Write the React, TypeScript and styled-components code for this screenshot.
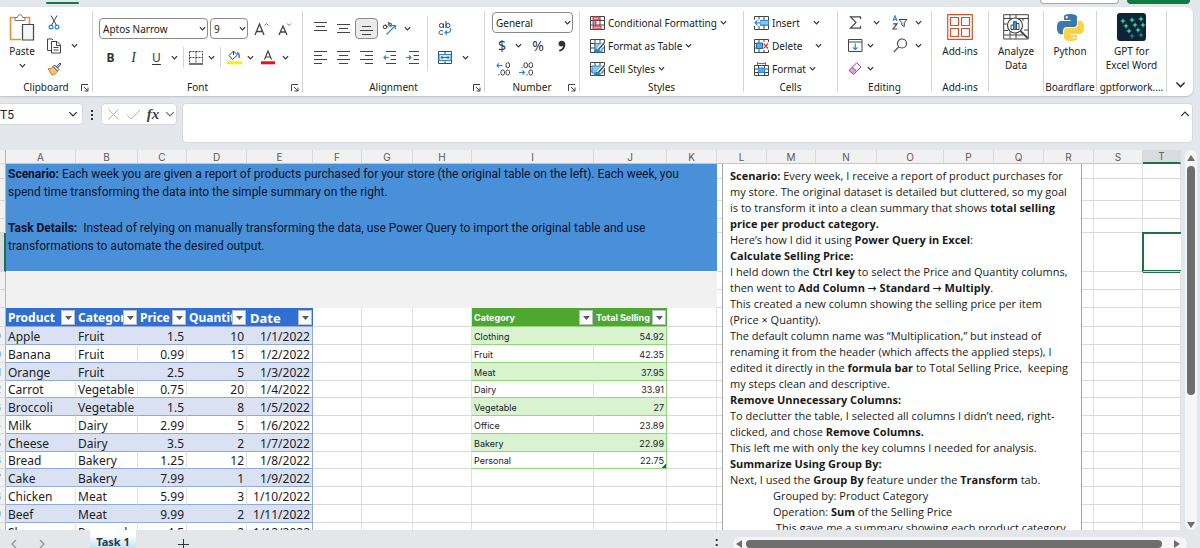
import React from "react";
import styled, { createGlobalStyle, css } from "styled-components";

const uiFont = `"Noto Sans", "Open Sans", sans-serif`;
const ink = "#333";
const blue = "#2b88d8";

const GlobalStyle = createGlobalStyle`
  * { box-sizing: border-box; }
  body { margin: 0; background: #e3e6eb; font-family: ${uiFont}; font-size: 10px; color: #222; overflow: hidden; }
  button, input, select { font: inherit; color: inherit; margin: 0; }
  button { background: none; border: 0; padding: 0; }
  svg { display: block; flex: none; }
`;

/* ---------- frame ---------- */
const Window = styled.div`
  display: flex;
  flex-direction: column;
  height: 100vh;
`;
const TabStrip = styled.header`
  flex: none;
  display: flex;
  align-items: flex-start;
  height: 7px;
  padding: 0 10px 0 46px;
  overflow: hidden;
`;
const ActiveTabMark = styled.span`
  width: 33px;
  height: 2px;
  margin: 2px auto 0 0;
  border-radius: 1px;
  background: #107c41;
`;
const TopButton = styled.button<{ $primary?: boolean }>`
  height: 4px;
  width: ${(p) => (p.$primary ? 63 : 79)}px;
  margin-left: 8px;
  border-radius: 0 0 4px 4px;
  background: ${(p) => (p.$primary ? "#107c41" : "#fff")};
  border: 1px solid ${(p) => (p.$primary ? "#107c41" : "#a8a8a8")};
  border-top: 0;
`;

/* ---------- ribbon ---------- */
const Ribbon = styled.nav`
  flex: none;
  display: flex;
  height: 89px;
  margin-right: 7px;
  padding-top: 4px;
  background: #fff;
  border-radius: 0 7px 7px 0;
  box-shadow: 0 1px 2px rgba(0, 0, 0, 0.18);
`;
const GroupBox = styled.section<{ $w: number }>`
  position: relative;
  flex: none;
  display: flex;
  flex-direction: column;
  width: ${(p) => p.$w}px;
  height: 81px;
  border-right: 1px solid #d4d4d4;
`;
const GroupBody = styled.div<{ $pad?: number }>`
  display: flex;
  height: 71px;
  padding-left: ${(p) => p.$pad ?? 0}px;
`;
const GroupLabel = styled.div`
  line-height: 10px;
  text-align: center;
  white-space: nowrap;
`;
const Launcher = styled.button`
  position: absolute;
  right: 3px;
  bottom: 0;
`;
const Stack = styled.div<{ $top?: number }>`
  display: flex;
  flex-direction: column;
  padding-top: ${(p) => p.$top ?? 0}px;
`;
const Row = styled.div<{ $h?: number }>`
  display: flex;
  align-items: center;
  height: ${(p) => p.$h ?? 23}px;
`;
const Spacer = styled.span<{ $w: number }>`
  flex: none;
  width: ${(p) => p.$w}px;
`;
const IconButton = styled.button<{ $w?: number; $boxed?: boolean }>`
  display: flex;
  flex: none;
  align-items: center;
  justify-content: center;
  width: ${(p) => p.$w ?? 23}px;
  height: 21px;
  color: ${ink};
  ${(p) =>
    p.$boxed &&
    css`
      background: #ebebeb;
      border: 1px solid #8a8a8a;
      border-radius: 4px;
    `}
`;
const Glyph = styled.span<{ $size?: number; $style?: "bold" | "italic" | "underline" }>`
  font-size: ${(p) => p.$size ?? 12}px;
  line-height: 16px;
  ${(p) => p.$style === "bold" && "font-weight: 700;"}
  ${(p) => p.$style === "italic" && `font-style: italic; font-family: "Liberation Serif", serif;`}
  ${(p) => p.$style === "underline" && "text-decoration: underline; text-underline-offset: 2px;"}
`;
const Separator = styled.span<{ $h?: number }>`
  width: 1px;
  height: ${(p) => p.$h ?? 21}px;
  margin: 0 3px;
  background: #d4d4d4;
`;
const TextButton = styled.button<{ $gap?: number }>`
  display: flex;
  align-items: center;
  height: 23px;
  gap: 3px;
  white-space: nowrap;
  & > svg:last-child {
    margin-left: ${(p) => p.$gap ?? 0}px;
  }
`;
const TallButton = styled.button<{ $w?: number }>`
  display: flex;
  flex-direction: column;
  align-items: center;
  width: ${(p) => (p.$w ? `${p.$w}px` : "100%")};
  padding-top: 2px;
  line-height: 14px;
`;
const TallIcon = styled.span`
  display: flex;
  align-items: center;
  height: 28px;
  margin-bottom: 3px;
`;
const TallDrop = styled.span`
  margin-top: 4px;
`;
const SelectFrame = styled.label<{ $w: number }>`
  position: relative;
  width: ${(p) => p.$w}px;
  height: 21px;
  margin-right: 2px;
  & > svg {
    position: absolute;
    right: 2px;
    top: 7px;
    pointer-events: none;
  }
`;
const Select = styled.select`
  appearance: none;
  width: 100%;
  height: 100%;
  padding: 0 0 0 3px;
  border: 1px solid #8a8a8a;
  border-radius: 4px;
  background: #fff;
`;
const RibbonEnd = styled.div`
  flex: 1;
  display: flex;
  align-items: flex-end;
  justify-content: center;
  padding-bottom: 6px;
`;

/* ---------- formula bar ---------- */
const FormulaRow = styled.div`
  flex: none;
  display: flex;
  align-items: flex-start;
  padding: 7px 7px 7px 0;
`;
const NameFrame = styled.div`
  display: flex;
  align-items: center;
  width: 83px;
  height: 22px;
  padding-right: 4px;
  background: #fff;
  border: 1px solid #d6d8dc;
  border-left: 0;
  border-radius: 0 4px 4px 0;
`;
const NameInput = styled.input`
  flex: 1;
  min-width: 0;
  border: 0;
  padding: 1px 0 0;
  background: none;
  font-family: Roboto, sans-serif;
  font-size: 12px;
`;
const Dots = styled.span`
  display: flex;
  justify-content: center;
  width: 18px;
  padding-top: 7px;
`;
const FxFrame = styled.div`
  display: flex;
  align-items: center;
  justify-content: space-between;
  width: 76px;
  height: 22px;
  margin-right: 5px;
  padding: 0 1px 0 5px;
  background: #fff;
  border: 1px solid #d6d8dc;
  border-radius: 4px;
`;
const FxGlyph = styled.span`
  font: italic 700 15px / 20px "Liberation Serif", serif;
  color: #444;
`;
const FormulaFrame = styled.div`
  flex: 1;
  display: flex;
  align-items: flex-start;
  height: 40px;
  padding: 5px 2px 0 6px;
  background: #fff;
  border: 1px solid #d6d8dc;
  border-radius: 4px;
`;
const FormulaInput = styled.input`
  flex: 1;
  border: 0;
  background: none;
`;

/* ---------- sheet ---------- */
const SheetArea = styled.main`
  flex: 1;
  min-height: 0;
  display: flex;
`;
const SheetView = styled.div`
  position: relative;
  flex: 1;
  min-width: 0;
  overflow: hidden;
  background: #fff;
`;
const SheetTable = styled.table`
  width: 100%;
  table-layout: fixed;
  border-collapse: separate;
  border-spacing: 0;
`;
const Tr = styled.tr<{ $h: number }>`
  height: ${(p) => p.$h}px;
`;
const ColHead = styled.th<{ $active?: boolean }>`
  height: 14px;
  padding: 0;
  font: 400 10px / 12px Inter, sans-serif;
  color: #5a5a5a;
  background: ${(p) => (p.$active ? "#d9dbde" : "#f1f1f1")};
  border-right: 1px solid #d9d9d9;
  border-bottom: ${(p) => (p.$active ? "2px solid #1e7145" : "1px solid #c4c4c4")};
`;
const RowHead = styled.th<{ $active?: boolean }>`
  padding: 0;
  background: ${(p) => (p.$active ? "#d9dbde" : "#f1f1f1")};
  border-right: ${(p) => (p.$active ? "2px solid #1e7145" : "1px solid #b5b5b5")};
  border-bottom: 1px solid #d9d9d9;
  overflow: hidden;
`;
const RowNumber = styled.div`
  display: flex;
  justify-content: flex-end;
  padding-right: 4px;
  font: 400 10px / 12px Inter, sans-serif;
  color: #5a6b80;
`;
const Cell = styled.td<{ $active?: boolean }>`
  padding: 0;
  border-right: 1px solid #e0e0e0;
  border-bottom: 1px solid #d9d9d9;
  ${(p) =>
    p.$active &&
    css`
      border-right: 0;
      box-shadow: 0 0 0 1px #1e7145, inset 1px 1px #1e7145, inset 0 -1px #1e7145;
    `}
`;
const Brief = styled.td`
  padding: 1px 2px 0;
  vertical-align: top;
  background: #4a90d9;
  border-bottom: 1px solid #fff;
  font: 400 12px / 18px Roboto, sans-serif;
  color: #08142c;
`;
const BriefLine = styled.p`
  margin: 0;
  min-height: 18px;
  white-space: pre;
`;
const GrayBand = styled.td`
  background: #f1f1f1;
  border-bottom: 1px solid #f1f1f1;
`;

type Tone = "blue" | "green";
const tones = {
  blue: {
    head: "#2f6fd0",
    band: "#d9e1f2",
    line: "#8ea9db",
    font: `400 12px / 15px "Noto Sans", sans-serif`,
    bold: `700 12px / 18px "Noto Sans", sans-serif`,
  },
  green: {
    head: "#4ea72e",
    band: "#d9f2d0",
    line: "#8ed973",
    font: `400 9px / 15px Inter, sans-serif`,
    bold: `700 9px / 18px Inter, sans-serif`,
  },
};
const DataCell = styled.td<{ $tone: Tone; $band?: boolean; $right?: boolean; $last?: boolean; $corner?: boolean }>`
  padding: 1px 2px 0;
  overflow: hidden;
  white-space: nowrap;
  font: ${(p) => tones[p.$tone].font};
  color: #1c1c28;
  text-align: ${(p) => (p.$right ? "right" : "left")};
  background: ${(p) => (p.$band ? tones[p.$tone].band : "#fff")};
  border-bottom: 1px solid ${(p) => tones[p.$tone].line};
  border-right: 1px solid ${(p) => (p.$last ? tones[p.$tone].line : p.$band ? tones[p.$tone].band : "#e0e0e0")};
  ${(p) => p.$corner && "background: linear-gradient(135deg, transparent 50%, #215c98 50%) right bottom / 4px 4px no-repeat #fff;"}
`;
const DataHead = styled.td<{ $tone: Tone }>`
  padding: 0 0 0 2px;
  overflow: hidden;
  font: ${(p) => tones[p.$tone].bold};
  color: #fff;
  background: ${(p) => tones[p.$tone].head};
  border-bottom: 1px solid ${(p) => tones[p.$tone].line};
`;
const HeadInner = styled.div`
  display: flex;
  align-items: center;
  height: 18px;
  padding: 1px 1px 0 0;
`;
const HeadText = styled.span<{ $large?: boolean }>`
  flex: 1;
  min-width: 0;
  overflow: hidden;
  white-space: nowrap;
  ${(p) => p.$large && "font-size: 13px; padding-left: 1px;"}
`;
const FilterButton = styled.button`
  flex: none;
  display: flex;
  align-items: center;
  justify-content: center;
  width: 14px;
  height: 15px;
  background: #fbfbfd;
  border: 1px solid #b9bfc9;
`;
const NoteBox = styled.article`
  position: absolute;
  top: 14px;
  bottom: 0;
  left: 722px;
  width: 360px;
  padding: 4px 0 0 7px;
  overflow: hidden;
  background: #fff;
  border: solid #a9a9a9;
  border-width: 0 1px;
  font: 400 11px / 16px "Open Sans", sans-serif;
  color: #1a1a1a;
`;
const NoteLine = styled.p<{ $indent?: boolean }>`
  margin: 0;
  padding-left: ${(p) => (p.$indent ? 43 : 0)}px;
  white-space: pre;
`;
const Arrow = styled.span`
  font-family: "Noto Sans CJK JP", sans-serif;
  font-size: 9px;
  line-height: 1;
`;

/* ---------- scroll bars and sheet tabs ---------- */
const VScroll = styled.div`
  flex: none;
  display: flex;
  flex-direction: column;
  align-items: center;
  width: 12px;
  margin: 0 3px 0 4px;
  padding: 4px 0 1px;
  border-radius: 6px;
  background: #f6f6f6;
`;
const VThumb = styled.div`
  width: 8px;
  height: 61%;
  margin: 4px 0 auto;
  border-radius: 4px;
  background: #6e6e6e;
`;
const Footer = styled.footer`
  flex: none;
  display: flex;
  align-items: flex-start;
  height: 18px;
  overflow: hidden;
  background: #e4e7ea;
`;
const FootButton = styled.button<{ $w: number }>`
  flex: none;
  display: flex;
  align-items: center;
  justify-content: center;
  width: ${(p) => p.$w}px;
  height: 28px;
`;
const SheetTab = styled.button`
  flex: none;
  width: 46px;
  height: 24px;
  margin-right: 5px;
  font: 700 11px / 24px "Noto Sans", sans-serif;
  color: #1d3a52;
  background: linear-gradient(#fff 20%, #a9d5ea);
`;
const HScroll = styled.div`
  display: flex;
  align-items: center;
  width: 454px;
  height: 14px;
  margin: 7px 13px 0 0;
  padding: 0 6px 0 2px;
  gap: 3px;
  border-radius: 7px;
  background: #f6f6f6;
`;
const HThumb = styled.div`
  flex: 1;
  height: 8px;
  margin-right: 8px;
  border-radius: 4px;
  background: #6e6e6e;
`;
const FootDots = styled.span`
  margin-left: auto;
  width: 18px;
  font: 700 12px / 24px "Noto Sans", sans-serif;
`;

/* ---------- icons ---------- */
const Chevron = ({ size = 7, color = "#333", up = false }: { size?: number; color?: string; up?: boolean }) => (
  <svg width={size} height={size} viewBox="0 0 8 8" fill="none" stroke={color} strokeWidth={size > 7 ? 1.1 : 1.4}>
    <path d={up ? "M1 5.5 4 2.5 7 5.5" : "M1 2.5 4 5.5 7 2.5"} />
  </svg>
);
const Svg = ({ w, h = w, children }: { w: number; h?: number; children: React.ReactNode }) => (
  <svg width={w} height={h} viewBox={`0 0 ${w} ${h}`} fill="none" stroke="#444">
    {children}
  </svg>
);
const PasteIcon = () => (
  <Svg w={26} h={27}>
    <path d="M6 3.500H1.500V25.500H12M16 3.500H20.500V10" stroke="#e8912d" strokeWidth="1.600" />
    <path d="M6 6.500V3.500H8.500C8.500-.2 13.500-.2 13.500 3.500H16V6.500Z" fill="#fff" stroke="#777" />
    <path d="M13.500 10.500H24.500V26H13.500Z" fill="#f4f6f8" stroke="#444" strokeWidth="1.200" />
  </Svg>
);
const CutIcon = () => (
  <Svg w={12} h={15}>
    <path d="M3 .5 8.500 10.500M9 .5 3.500 10.500" />
    <circle cx="3" cy="12" r="1.900" stroke={blue} strokeWidth="1.200" />
    <circle cx="9" cy="12" r="1.900" stroke={blue} strokeWidth="1.200" />
  </Svg>
);
const CopyIcon = () => (
  <Svg w={16} h={16}>
    <path d="M5 12.500H1.500V1H6L7 2" />
    <path d="M5.500 3.500H11L14.500 7V15H5.500ZM10.500 3.500V7.500H14.500M7.500 9.500H12.500M7.500 12H12.500" />
  </Svg>
);
const BrushIcon = () => (
  <Svg w={15} h={14}>
    <path d="M1 6.500C4 7 5 6 6.500 4.500L10.500 9C8.500 12.500 6.500 13 5 13Z" fill="#f6c27c" stroke="#d87a1a" />
    <path d="M6 4.500 7.500 3 12 7.500 10.500 9ZM9.500 5 13 1 14 2 10.500 6" fill="#fff" />
  </Svg>
);
const LauncherIcon = () => (
  <Svg w={8} h={8}>
    <path d="M.5 7V.5H7M3 3 7 7M7 3.500V7H3.500" />
  </Svg>
);
const FontSizeIcon = ({ up }: { up: boolean }) => (
  <Svg w={15} h={14}>
    <path d={up ? "M1 13 5.500 2 10 13M2.500 9.500H8.500" : "M2 13 6 4 10 13M3.500 10H8.500"} strokeWidth="1.300" />
    <path d={up ? "M10.500 3.500 12.500 1.500 14.500 3.500" : "M10 1.500 12 3.500 14 1.500"} stroke={blue} />
  </Svg>
);
const BordersIcon = () => (
  <Svg w={14} h={14}>
    <path d="M.5 .5H13.500V12M.5 .5V12M7 .5V12M.5 6.500H13.500" strokeDasharray="2 1" />
    <path d="M0 13H14" strokeWidth="1.500" />
  </Svg>
);
const FillIcon = () => (
  <Svg w={15} h={15}>
    <path d="M6.500 1 2 5.500 5.500 9.500 10.500 5Z M6.500 1V5" />
    <path d="M10 2.500C12.500 3 12.500 5 12 8" stroke={blue} strokeWidth="1.600" />
    <path d="M0 12.800H15" stroke="#ffee00" strokeWidth="3" />
  </Svg>
);
const FontColorIcon = () => (
  <Svg w={14} h={15}>
    <path d="M3.500 9.500 7 1 10.500 9.500M4.500 7H9.500" strokeWidth="1.200" />
    <path d="M0 12.800H14" stroke="#e81010" strokeWidth="3" />
  </Svg>
);
const LinesIcon = ({ d }: { d: string }) => (
  <Svg w={13} h={13}>
    <path d={d} />
  </Svg>
);
const IndentIcon = ({ out }: { out?: boolean }) => (
  <Svg w={13} h={13}>
    <path d="M3 .5H13M7.500 4.500H13M7.500 8.500H13M3 12.500H13" />
    <path d={out ? "M6 6.500H.8M3 4.500 1 6.500 3 8.500" : "M0 6.500H5.200M3 4.500 5 6.500 3 8.500"} stroke={blue} strokeWidth="1.200" />
  </Svg>
);
const OrientationIcon = () => (
  <Svg w={15} h={15}>
    <circle cx="3" cy="6" r="1.800" />
    <path d="M3.500 3.500 6 6.500M6 1 9.500 5.500" />
    <circle cx="8" cy="3.600" r="1.600" />
    <path d="M4.500 13.500 13.500 4.500M10 4.500H13.500V8" stroke={blue} strokeWidth="1.200" />
  </Svg>
);
const WrapIcon = () => (
  <Svg w={14} h={15}>
    <circle cx="3.300" cy="4.500" r="2" />
    <path d="M5.500 2.500V7M8 0V7" />
    <circle cx="10" cy="4.500" r="2" />
    <path d="M5 10C2.500 8.800 1 10 1 11.500S2.500 14 5 13" />
    <path d="M12 7.500C13.500 9 12.500 11.500 10 11.500H7M9 9.500 7 11.500 9 13.500" stroke={blue} strokeWidth="1.200" />
  </Svg>
);
const MergeIcon = () => (
  <Svg w={14} h={13}>
    <path d="M.5 .5H13.500V12.500H.5ZM7 .5V3M7 10V12.500" />
    <path d="M1 3.500H13V9.500H1Z" fill="#d5eafa" stroke={blue} />
    <path d="M3 6.500H11M4.500 5 3 6.500 4.500 8M9.500 5 11 6.500 9.500 8" stroke="#1b6ab0" />
  </Svg>
);
const DecimalIcon = ({ more }: { more?: boolean }) => (
  <Svg w={15} h={14}>
    {more ? (
      <>
        <path d="M6.500 3.500H.8M3 1.300 1 3.500 3 5.700" stroke={blue} strokeWidth="1.200" />
        <rect x="10" y=".7" width="3.500" height="5" rx="1.700" />
        <rect x="5" y="8" width="3.500" height="5" rx="1.700" />
        <rect x="10" y="8" width="3.500" height="5" rx="1.700" />
        <path d="M3 12V13.300" />
      </>
    ) : (
      <>
        <path d="M0 10.500H5.500M3.500 8.300 5.500 10.500 3.500 12.700" stroke={blue} strokeWidth="1.200" />
        <rect x="5" y=".7" width="3.500" height="5" rx="1.700" />
        <rect x="10" y=".7" width="3.500" height="5" rx="1.700" />
        <rect x="10" y="8" width="3.500" height="5" rx="1.700" />
        <path d="M3 4.800V6M8 12V13.300" />
      </>
    )}
  </Svg>
);
const grid15 = "M.5 .5H14.500V13.500H.5ZM.5 4.500H14.500M.5 9H14.500M5 .5V13.500M10 .5V13.500";
const CondFormatIcon = () => (
  <Svg w={15} h={14}>
    <path d={grid15} />
    <path d="M3 1H9V4H3ZM3 10H11V13H3Z" fill="#f3a5a5" stroke="#d13438" />
    <path d="M3 4.500H6V9.500H3Z" fill="#5aa7e6" stroke="#d13438" />
  </Svg>
);
const TableStyleIcon = ({ full }: { full?: boolean }) => (
  <Svg w={15} h={14}>
    <path d={grid15} />
    <path d={full ? "M2 4H13V11H2Z" : "M5 4.500H12V13H5Z"} fill="#8cc4f0" stroke={blue} />
    <path d="M14.500 3.500 8 11" stroke="#fff" strokeWidth="3.500" />
    <path d="M14.500 3.500 8.500 10.500" strokeWidth="1.500" />
    <path d="M4.500 13.500C5 10.500 7 9.500 9 11S7 13.500 4.500 13.500Z" fill="#2b88d8" stroke="#1b6ab0" />
  </Svg>
);
const InsertIcon = () => (
  <Svg w={15} h={14}>
    <path d={grid15} />
    <path d="M6 4.500H14.500V9H6Z" fill="#8cc4f0" stroke={blue} />
    <path d="M0 3.500H6V10H0Z" fill="#fff" stroke="none" />
    <path d="M6 6.800H1M3.500 4.300 1 6.800 3.500 9.300" stroke={blue} strokeWidth="1.200" />
  </Svg>
);
const DeleteIcon = () => (
  <Svg w={15} h={14}>
    <path d={grid15} />
    <path d="M2.500 4H8.500V9.500H2.500Z" fill="#5aa7e6" stroke="#1b6ab0" />
    <path d="M9 3H15V11H9Z" fill="#fff" stroke="none" />
    <path d="M9.500 4.500 14 9.500M14 4.500 9.500 9.500" stroke="#e23b3b" strokeWidth="1.200" />
  </Svg>
);
const FormatIcon = () => (
  <Svg w={15} h={14}>
    <path d="M.5 3.500H14.500V13.500H.5ZM.5 7H14.500M.5 10.500H14.500M4.500 3.500V13.500M10.500 3.500V13.500" />
    <path d="M4.500 6H10.500V10.500H4.500Z" fill="#5aa7e6" stroke={blue} />
    <path d="M3.500 0V3M11.500 0V3M3.500 1.500H11.500" stroke={blue} />
  </Svg>
);
const SumIcon = () => (
  <Svg w={13} h={13}>
    <path d="M11.500 3V.8H1.500L7 6.500 1.500 12.200H11.500V10" strokeWidth="1.200" />
  </Svg>
);
const SortIcon = () => (
  <Svg w={16} h={15}>
    <path d="M1 6 3 .8 5 6M1.700 4.500H4.300" stroke={blue} strokeWidth="1.200" />
    <path d="M1.200 8.800H5L1 14H5.200" strokeWidth="1.200" />
    <path d="M7 4.500H15L12.300 7.500V11.500L9.800 10V7.500Z" />
  </Svg>
);
const FillDownIcon = () => (
  <Svg w={15} h={13}>
    <path d="M.5 .5H14V12.500H.5ZM.5 3H14" />
    <path d="M7.300 4.500V10.500M5 8.300 7.300 10.600 9.600 8.300" stroke={blue} strokeWidth="1.200" />
  </Svg>
);
const FindIcon = () => (
  <Svg w={15} h={15}>
    <circle cx="9" cy="5.500" r="4.500" strokeWidth="1.200" />
    <path d="M5.800 8.800.8 14" strokeWidth="1.200" />
  </Svg>
);
const EraserIcon = () => (
  <Svg w={14} h={13}>
    <path d="M1 8.500 4.300 5 8.700 9.300 5.500 12.300Z" fill="#d9a6e0" stroke="#a044ad" />
    <path d="M4.300 5 8.800.8 13 5 8.700 9.300Z" fill="#fff" stroke="#a044ad" />
  </Svg>
);
const AddInsIcon = () => (
  <Svg w={26} h={26}>
    <path
      d="M.7 .7H25.300V25.300H.7ZM3.500 3.500H11.500V11.500H3.500ZM14.500 3.500H22.500V11.500H14.500ZM3.500 14.500H11.500V22.500H3.500ZM14.500 14.500H22.500V22.500H14.500Z"
      stroke="#d2522d"
      strokeWidth="1.200"
    />
  </Svg>
);
const AnalyzeIcon = () => (
  <Svg w={26} h={26}>
    <path d="M.7 .7H25.300V25H.7ZM.7 4.500H25M.7 10H5M.7 16.500H5M.7 21H20M20 4.500V7M7 1V4M13 1V4M7 18V25M13 19V25M21 16H25" />
    <circle cx="12" cy="11.500" r="7.500" fill="#fff" strokeWidth="1.200" />
    <path d="M17.500 17 24.500 24" strokeWidth="1.800" />
    <path d="M8 11H10.500V15.500H8Z" />
    <path d="M10.500 7.500H13.500V15.500H10.500Z" fill="#3b96e0" stroke="#1b6ab0" />
    <path d="M13.500 9.500H16V15.500H13.500Z" />
  </Svg>
);
const PythonIcon = () => (
  <svg width="27" height="27" viewBox="0 0 24 24">
    <path
      fill="#3c78aa"
      d="M14.25.18l.9.2.73.26.59.3.45.32.34.34.25.34.16.33.1.3.04.26.02.2-.01.13V8.500l-.05.63-.13.55-.21.46-.26.38-.3.31-.33.25-.35.19-.35.14-.33.1-.3.07-.26.04-.21.02H8.770l-.69.05-.59.14-.5.22-.41.27-.33.32-.27.35-.2.36-.15.37-.1.35-.07.32-.04.27-.02.21v3.060H3.170l-.21-.03-.28-.07-.32-.12-.35-.18-.36-.26-.36-.36-.35-.46-.32-.59-.28-.73-.21-.88-.14-1.050-.05-1.230.06-1.220.16-1.040.24-.87.32-.71.36-.57.4-.44.42-.33.42-.24.4-.16.36-.1.32-.05.24-.01h.16l.06.01h8.160v-.83H6.180l-.01-2.750-.02-.37.05-.34.11-.31.17-.28.25-.26.31-.23.38-.2.44-.18.51-.15.58-.12.64-.1.71-.06.77-.04.84-.02 1.270.05zM7.950 2.160l-.23.33-.08.41.08.41.23.34.33.22.41.09.41-.09.33-.22.23-.34.08-.41-.08-.41-.23-.33-.33-.22-.41-.09-.41.09z"
    />
    <path
      fill="#fcd344"
      d="M21.100 6.110l.28.06.32.12.35.18.36.27.36.35.35.47.32.59.28.73.21.88.14 1.040.05 1.230-.06 1.230-.16 1.040-.24.86-.32.71-.36.57-.4.45-.42.33-.42.24-.4.16-.36.09-.32.05-.24.02-.16-.01h-8.220v.82h5.840l.01 2.760.02.36-.05.34-.11.31-.17.29-.25.25-.31.24-.38.2-.44.17-.51.15-.58.13-.64.09-.71.07-.77.04-.84.01-1.270-.04-1.070-.14-.9-.2-.73-.25-.59-.3-.45-.33-.34-.34-.25-.34-.16-.33-.1-.3-.04-.25-.02-.2.01-.13v-5.340l.05-.64.13-.54.21-.46.26-.38.3-.32.33-.24.35-.2.35-.14.33-.1.3-.06.26-.04.21-.02.13-.01h5.840l.69-.05.59-.14.5-.21.41-.28.33-.32.27-.35.2-.36.15-.36.1-.35.07-.32.04-.28.02-.21V6.070h2.090l.14.01zM14.630 20.360l-.23.33-.08.41.08.41.23.33.33.23.41.08.41-.08.33-.23.23-.33.08-.41-.08-.41-.23-.33-.33-.23-.41-.08-.41.08z"
    />
  </svg>
);
const sparks = [
  [6, 8], [15, 7], [24, 6], [9, 13], [18, 12], [26, 12], [12, 18], [21, 17], [15, 23], [24, 22],
];
const GptIcon = () => (
  <svg width="29" height="28" viewBox="0 0 29 28">
    <rect width="29" height="28" rx="3" fill="#0f2238" />
    {sparks.map(([x, y], i) => (
      <path
        key={i}
        transform={`translate(${x} ${y})`}
        opacity={y > 20 ? 0.55 : 1}
        fill="#2fe0a5"
        d="M0-3 .8-.8 3 0 .8 .8 0 3-.8 .8-3 0-.8-.8Z"
      />
    ))}
  </svg>
);
const Triangle = ({ dir }: { dir: "up" | "down" | "left" | "right" }) => {
  const d = { up: "M0 7H8L4 1Z", down: "M0 1H8L4 7Z", left: "M7 0V8L1 4Z", right: "M1 0V8L7 4Z" }[dir];
  return (
    <svg width="8" height="8" viewBox="0 0 8 8" fill="#6e6e6e">
      <path d={d} />
    </svg>
  );
};
const FilterArrow = () => (
  <svg width="7" height="4" viewBox="0 0 7 4" fill="#555c68">
    <path d="M0 0H7L3.500 4Z" />
  </svg>
);

/* ---------- data ---------- */
const columns: [string, number | null][] = [
  ["A", 70], ["B", 62], ["C", 49], ["D", 60], ["E", 66], ["F", 49], ["G", 51], ["H", 59], ["I", 122], ["J", 73],
  ["K", 50], ["L", 50], ["M", 49], ["N", 61], ["O", 67], ["P", 50], ["Q", 50], ["R", 50], ["S", 49], ["T", null],
];
const rowHeights = [15, 22, 18, 14, 39, 18, 18, 19, 18, 18, 18, 17, 18, 18, 18, 17, 18, 18, 18, 18];
const productHead = ["Product", "Category", "Price", "Quantity", "Date"];
const products = [
  ["Apple", "Fruit", "1.5", "10", "1/1/2022"],
  ["Banana", "Fruit", "0.99", "15", "1/2/2022"],
  ["Orange", "Fruit", "2.5", "5", "1/3/2022"],
  ["Carrot", "Vegetable", "0.75", "20", "1/4/2022"],
  ["Broccoli", "Vegetable", "1.5", "8", "1/5/2022"],
  ["Milk", "Dairy", "2.99", "5", "1/6/2022"],
  ["Cheese", "Dairy", "3.5", "2", "1/7/2022"],
  ["Bread", "Bakery", "1.25", "12", "1/8/2022"],
  ["Cake", "Bakery", "7.99", "1", "1/9/2022"],
  ["Chicken", "Meat", "5.99", "3", "1/10/2022"],
  ["Beef", "Meat", "9.99", "2", "1/11/2022"],
  ["Shampoo", "Personal", "4.5", "2", "1/12/2022"],
];
const totals = [
  ["Clothing", "54.92"], ["Fruit", "42.35"], ["Meat", "37.95"], ["Dairy", "33.91"],
  ["Vegetable", "27"], ["Office", "23.89"], ["Bakery", "22.99"], ["Personal", "22.75"],
];

const HeadCell = ({ tone, text, large }: { tone: Tone; text: string; large?: boolean }) => (
  <DataHead $tone={tone}>
    <HeadInner>
      <HeadText $large={large}>{text}</HeadText>
      <FilterButton aria-label={`Filter ${text}`}>
        <FilterArrow />
      </FilterButton>
    </HeadInner>
  </DataHead>
);

type GroupProps = { w: number; label?: string; pad?: number; launcher?: boolean; children: React.ReactNode };
const Group = ({ w, label, pad, launcher, children }: GroupProps) => (
  <GroupBox $w={w} aria-label={label}>
    <GroupBody $pad={pad}>{children}</GroupBody>
    {label && <GroupLabel>{label}</GroupLabel>}
    {launcher && (
      <Launcher aria-label={`${label} settings`}>
        <LauncherIcon />
      </Launcher>
    )}
  </GroupBox>
);
const Drop = ({ w = 12, label }: { w?: number; label: string }) => (
  <IconButton $w={w} aria-label={label}>
    <Chevron />
  </IconButton>
);

const RibbonBar = () => (
  <Ribbon>
    <Group w={93} label="Clipboard" launcher>
      <TallButton $w={44}>
        <TallIcon><PasteIcon /></TallIcon>
        Paste
        <TallDrop><Chevron /></TallDrop>
      </TallButton>
      <Stack>
        <Row><IconButton $w={20} aria-label="Cut"><CutIcon /></IconButton></Row>
        <Row>
          <IconButton $w={20} aria-label="Copy"><CopyIcon /></IconButton>
          <Drop w={20} label="Copy options" />
        </Row>
        <Row><IconButton $w={20} aria-label="Format painter"><BrushIcon /></IconButton></Row>
      </Stack>
    </Group>

    <Group w={210} label="Font" pad={6} launcher>
      <Stack $top={3}>
        <Row $h={29}>
          <SelectFrame $w={109}>
            <Select aria-label="Font name" defaultValue="Aptos Narrow"><option>Aptos Narrow</option></Select>
            <Chevron />
          </SelectFrame>
          <SelectFrame $w={38}>
            <Select aria-label="Font size" defaultValue="9"><option>9</option></Select>
            <Chevron />
          </SelectFrame>
          <IconButton aria-label="Increase font size"><FontSizeIcon up /></IconButton>
          <IconButton aria-label="Decrease font size"><FontSizeIcon up={false} /></IconButton>
        </Row>
        <Row $h={29}>
          <IconButton><Glyph $style="bold">B</Glyph></IconButton>
          <IconButton><Glyph $size={14} $style="italic">I</Glyph></IconButton>
          <IconButton><Glyph $style="underline">U</Glyph></IconButton>
          <Drop label="Underline options" />
          <Separator />
          <IconButton $w={18} aria-label="Borders"><BordersIcon /></IconButton>
          <Drop label="Border options" />
          <Separator />
          <IconButton $w={20} aria-label="Fill colour"><FillIcon /></IconButton>
          <Drop label="Fill options" />
          <IconButton aria-label="Font colour"><FontColorIcon /></IconButton>
          <Drop label="Font colour options" />
        </Row>
      </Stack>
    </Group>

    <Group w={182} label="Alignment" pad={6} launcher>
      <Stack $top={3}>
        <Row $h={29}>
          <IconButton aria-label="Top align"><LinesIcon d="M0 .5H13M2 4.500H11M0 8.500H13" /></IconButton>
          <IconButton aria-label="Middle align"><LinesIcon d="M0 2.500H13M2 6.500H11M0 10.500H13" /></IconButton>
          <IconButton aria-label="Bottom align" $boxed><LinesIcon d="M2 4.500H11M0 8.500H13M2 12.500H11" /></IconButton>
          <IconButton aria-label="Orientation"><OrientationIcon /></IconButton>
          <Drop label="Orientation options" />
        </Row>
        <Row $h={29}>
          <IconButton aria-label="Align left"><LinesIcon d="M0 .5H13M0 4.500H8M0 8.500H13M0 12.500H8" /></IconButton>
          <IconButton aria-label="Centre"><LinesIcon d="M0 .5H13M2 4.500H11M0 8.500H13M2 12.500H11" /></IconButton>
          <IconButton aria-label="Align right"><LinesIcon d="M0 .5H13M5 4.500H13M0 8.500H13M5 12.500H13" /></IconButton>
          <IconButton aria-label="Decrease indent"><IndentIcon out /></IconButton>
          <IconButton aria-label="Increase indent"><IndentIcon /></IconButton>
        </Row>
      </Stack>
      <Row $h={65}><Separator $h={55} /></Row>
      <Stack $top={3}>
        <Row $h={29}><IconButton $w={28} aria-label="Wrap text"><WrapIcon /></IconButton></Row>
        <Row $h={29}>
          <IconButton $w={28} aria-label="Merge and centre"><MergeIcon /></IconButton>
          <Drop label="Merge options" />
        </Row>
      </Stack>
    </Group>

    <Group w={95} label="Number" pad={7} launcher>
      <Stack>
        <Row>
          <SelectFrame $w={81}>
            <Select aria-label="Number format" defaultValue="General"><option>General</option></Select>
            <Chevron />
          </SelectFrame>
        </Row>
        <Row>
          <IconButton $w={20}><Glyph $size={14}>$</Glyph></IconButton>
          <Drop label="Currency options" />
          <IconButton $w={28}><Glyph $size={14}>%</Glyph></IconButton>
          <IconButton $w={20} aria-label="Comma style">
            <Svg w={8} h={12}>
              <path d="M1 10C4 9 5 7.500 5 6C3 7 .5 6 .5 3.700C.5 2 2 .7 3.800 .7C6 .7 7.300 2.300 7.300 4.500C7.300 8 5 11 1.500 11.500Z" fill="#333" stroke="none" />
            </Svg>
          </IconButton>
        </Row>
        <Row>
          <IconButton aria-label="Increase decimal"><DecimalIcon more /></IconButton>
          <IconButton aria-label="Decrease decimal"><DecimalIcon /></IconButton>
        </Row>
      </Stack>
    </Group>

    <Group w={164} label="Styles" pad={10}>
      <Stack>
        <TextButton><CondFormatIcon />Conditional Formatting<Chevron /></TextButton>
        <TextButton><TableStyleIcon />Format as Table<Chevron /></TextButton>
        <TextButton><TableStyleIcon full />Cell Styles<Chevron /></TextButton>
      </Stack>
    </Group>

    <Group w={94} label="Cells" pad={10}>
      <Stack>
        <TextButton $gap={10}><InsertIcon />Insert<Chevron /></TextButton>
        <TextButton $gap={10}><DeleteIcon />Delete<Chevron /></TextButton>
        <TextButton><FormatIcon />Format<Chevron /></TextButton>
      </Stack>
    </Group>

    <Group w={94} label="Editing" pad={8}>
      <Stack>
        <Row>
          <IconButton $w={18} aria-label="AutoSum"><SumIcon /></IconButton>
          <Drop w={24} label="AutoSum options" />
          <IconButton $w={24} aria-label="Sort and filter"><SortIcon /></IconButton>
          <Drop label="Sort options" />
        </Row>
        <Row>
          <IconButton $w={18} aria-label="Fill"><FillDownIcon /></IconButton>
          <Drop label="Fill direction" />
          <Spacer $w={12} />
          <IconButton $w={24} aria-label="Find and select"><FindIcon /></IconButton>
          <Drop label="Find options" />
        </Row>
        <Row>
          <IconButton $w={18} aria-label="Clear"><EraserIcon /></IconButton>
          <Drop label="Clear options" />
        </Row>
      </Stack>
    </Group>

    <Group w={57} label="Add-ins">
      <TallButton><TallIcon><AddInsIcon /></TallIcon>Add-ins</TallButton>
    </Group>
    <Group w={55}>
      <TallButton><TallIcon><AnalyzeIcon /></TallIcon>Analyze<br />Data</TallButton>
    </Group>
    <Group w={53} label="Boardflare">
      <TallButton><TallIcon><PythonIcon /></TallIcon>Python</TallButton>
    </Group>
    <Group w={70} label="gptforwork....">
      <TallButton><TallIcon><GptIcon /></TallIcon>GPT for<br />Excel Word</TallButton>
    </Group>
    <RibbonEnd>
      <button aria-label="Collapse ribbon"><Chevron size={11} /></button>
    </RibbonEnd>
  </Ribbon>
);

const FormulaBar = () => (
  <FormulaRow>
    <NameFrame>
      <NameInput aria-label="Name box" defaultValue="T5" />
      <Chevron size={10} />
    </NameFrame>
    <Dots>
      <svg width="2" height="10" viewBox="0 0 2 10" fill="#333"><path d="M0 0H2V2H0ZM0 4H2V6H0ZM0 8H2V10H0Z" /></svg>
    </Dots>
    <FxFrame>
      <svg width="13" height="13" viewBox="0 0 13 13" stroke="#b3b3b3"><path d="M1.500 1.500 11.500 11.500M11.500 1.500 1.500 11.500" /></svg>
      <svg width="15" height="13" viewBox="0 0 15 13" fill="none" stroke="#b3b3b3"><path d="M1 7 5 11 14 2" /></svg>
      <FxGlyph>fx</FxGlyph>
      <Chevron size={10} color="#777" />
    </FxFrame>
    <FormulaFrame>
      <FormulaInput aria-label="Formula" />
      <Chevron size={10} up />
    </FormulaFrame>
  </FormulaRow>
);

const rowCells = (row: number) => {
  const cells: React.ReactNode[] = [];
  const band = row % 2 === 1;
  if (row === 8) {
    productHead.forEach((t) => cells.push(<HeadCell key={t} tone="blue" text={t} large={t === "Date"} />));
  } else if (row > 8) {
    products[row - 9].forEach((t, i) =>
      cells.push(
        <DataCell key={i} $tone="blue" $band={band} $right={i > 1} $last={i === 4}>{t}</DataCell>
      )
    );
  }
  const start = row < 8 ? 11 : 5;
  for (let c = start; c < columns.length; c++) {
    const key = `c${c}`;
    const inTotals = c === 8 || c === 9;
    if (inTotals && row === 8) {
      cells.push(<HeadCell key={key} tone="green" text={c === 8 ? "Category" : "Total Selling Price"} />);
    } else if (inTotals && row > 8 && row < 17) {
      cells.push(
        <DataCell key={key} $tone="green" $band={band} $right={c === 9} $last={c === 9} $corner={c === 9 && row === 16}>
          {totals[row - 9][c - 8]}
        </DataCell>
      );
    } else {
      cells.push(<Cell key={key} $active={c === 19 && row === 5} />);
    }
  }
  return cells;
};

const Sheet = () => (
  <SheetTable>
    <colgroup>
      <col width={6} />
      {columns.map(([name, w]) => (w ? <col key={name} width={w} /> : <col key={name} />))}
    </colgroup>
    <thead>
      <Tr $h={14}>
        <RowHead />
        {columns.map(([name]) => <ColHead key={name} $active={name === "T"}>{name}</ColHead>)}
      </Tr>
    </thead>
    <tbody>
      {rowHeights.map((h, i) => (
        <Tr key={i} $h={h}>
          <RowHead $active={i === 4}>{i > 7 && <RowNumber>{i + 1}</RowNumber>}</RowHead>
          {i === 0 && (
            <Brief colSpan={11} rowSpan={5}>
              <BriefLine><b>Scenario:</b> Each week you are given a report of products purchased for your store (the original table on the left). Each week, you</BriefLine>
              <BriefLine>spend time transforming the data into the simple summary on the right.</BriefLine>
              <BriefLine />
              <BriefLine><b>Task Details:</b>  Instead of relying on manually transforming the data, use Power Query to import the original table and use</BriefLine>
              <BriefLine>transformations to automate the desired output.</BriefLine>
            </Brief>
          )}
          {i === 5 && <GrayBand colSpan={11} rowSpan={2} />}
          {rowCells(i + 1)}
        </Tr>
      ))}
    </tbody>
  </SheetTable>
);

const Notes = () => (
  <NoteBox>
    <NoteLine><b>Scenario:</b> Every week, I receive a report of product purchases for</NoteLine>
    <NoteLine>my store. The original dataset is detailed but cluttered, so my goal</NoteLine>
    <NoteLine>is to transform it into a clean summary that shows <b>total selling</b></NoteLine>
    <NoteLine><b>price per product category.</b></NoteLine>
    <NoteLine>Here’s how I did it using <b>Power Query in Excel</b>:</NoteLine>
    <NoteLine><b>Calculate Selling Price:</b></NoteLine>
    <NoteLine>I held down the <b>Ctrl key</b> to select the Price and Quantity columns,</NoteLine>
    <NoteLine>then went to <b>Add Column <Arrow>→</Arrow> Standard <Arrow>→</Arrow> Multiply</b>.</NoteLine>
    <NoteLine>This created a new column showing the selling price per item</NoteLine>
    <NoteLine>(Price × Quantity).</NoteLine>
    <NoteLine>The default column name was “Multiplication,” but instead of</NoteLine>
    <NoteLine>renaming it from the header (which affects the applied steps), I</NoteLine>
    <NoteLine>edited it directly in the <b>formula bar</b> to Total Selling Price,  keeping</NoteLine>
    <NoteLine>my steps clean and descriptive.</NoteLine>
    <NoteLine><b>Remove Unnecessary Columns:</b></NoteLine>
    <NoteLine>To declutter the table, I selected all columns I didn’t need, right-</NoteLine>
    <NoteLine>clicked, and chose <b>Remove Columns.</b></NoteLine>
    <NoteLine>This left me with only the key columns I needed for analysis.</NoteLine>
    <NoteLine><b>Summarize Using Group By:</b></NoteLine>
    <NoteLine>Next, I used the <b>Group By</b> feature under the <b>Transform</b> tab.</NoteLine>
    <NoteLine $indent>Grouped by: Product Category</NoteLine>
    <NoteLine $indent>Operation: <b>Sum</b> of the Selling Price</NoteLine>
    <NoteLine $indent> This gave me a summary showing each product category</NoteLine>
  </NoteBox>
);

const NavArrow = ({ d }: { d: string }) => (
  <svg width="8" height="10" viewBox="0 0 8 10" fill="none" stroke="#8a8f96" strokeWidth="1.200"><path d={d} /></svg>
);

export default function App() {
  return (
    <Window>
      <GlobalStyle />
      <TabStrip>
        <ActiveTabMark />
        <TopButton aria-label="Comments" />
        <TopButton $primary aria-label="Share" />
      </TabStrip>
      <RibbonBar />
      <FormulaBar />
      <SheetArea>
        <SheetView>
          <Sheet />
          <Notes />
        </SheetView>
        <VScroll>
          <Triangle dir="up" />
          <VThumb />
          <Triangle dir="down" />
        </VScroll>
      </SheetArea>
      <Footer>
        <FootButton $w={28} aria-label="Previous sheet"><NavArrow d="M6 1 2 5 6 9" /></FootButton>
        <FootButton $w={28} aria-label="Next sheet"><NavArrow d="M2 1 6 5 2 9" /></FootButton>
        <Spacer $w={34} />
        <SheetTab>Task 1</SheetTab>
        <FootButton $w={84} aria-label="New sheet">
          <svg width="11" height="11" viewBox="0 0 11 11" stroke="#333"><path d="M5.500 0V11M0 5.500H11" /></svg>
        </FootButton>
        <FootDots>:</FootDots>
        <HScroll>
          <Triangle dir="left" />
          <HThumb />
          <Triangle dir="right" />
        </HScroll>
      </Footer>
    </Window>
  );
}
